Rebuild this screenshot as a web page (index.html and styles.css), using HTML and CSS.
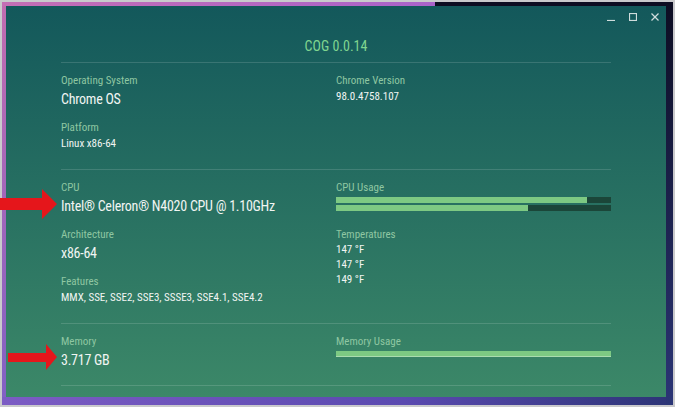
FILE: index.html
```html
<!DOCTYPE html>
<html lang="en">
<head>
    <meta charset="UTF-8">
    <meta name="viewport" content="width=device-width, initial-scale=1.0">
    <title>COG 0.0.14</title>
    <link rel="stylesheet" href="styles.css">
</head>
<body>
    <div class="desktop">
        <div class="window">
            <!-- window controls -->
            <div class="titlebar">
                <svg class="win-btn" viewBox="0 0 8 8"><line x1="0" y1="7.5" x2="8" y2="7.5"/></svg>
                <svg class="win-btn" viewBox="0 0 8 8"><rect x="0.5" y="0.5" width="7" height="7"/></svg>
                <svg class="win-btn" viewBox="0 0 8 8"><line x1="0.5" y1="0.5" x2="7.5" y2="7.5"/><line x1="7.5" y1="0.5" x2="0.5" y2="7.5"/></svg>
            </div>

            <div class="app-title">COG 0.0.14</div>

            <div class="sections">
                <!-- OS -->
                <section class="section">
                    <div class="col">
                        <div class="field">
                            <div class="label">Operating System</div>
                            <div class="value big">Chrome OS</div>
                        </div>
                        <div class="field">
                            <div class="label">Platform</div>
                            <div class="value">Linux x86-64</div>
                        </div>
                    </div>
                    <div class="col">
                        <div class="field">
                            <div class="label">Chrome Version</div>
                            <div class="value">98.0.4758.107</div>
                        </div>
                    </div>
                </section>

                <!-- CPU -->
                <section class="section">
                    <div class="col">
                        <div class="field">
                            <div class="label">CPU</div>
                            <div class="value big">Intel® Celeron® N4020 CPU @ 1.10GHz</div>
                        </div>
                        <div class="field">
                            <div class="label">Architecture</div>
                            <div class="value big">x86-64</div>
                        </div>
                        <div class="field">
                            <div class="label">Features</div>
                            <div class="value">MMX, SSE, SSE2, SSE3, SSSE3, SSE4.1, SSE4.2</div>
                        </div>
                    </div>
                    <div class="col">
                        <div class="field">
                            <div class="label">CPU Usage</div>
                            <div class="bars">
                                <div class="bar"><div class="bar-fill" style="width: 91.3%"></div></div>
                                <div class="bar"><div class="bar-fill" style="width: 69.8%"></div></div>
                            </div>
                        </div>
                        <div class="field">
                            <div class="label">Temperatures</div>
                            <div class="temps">
                                <div>147 °F</div>
                                <div>147 °F</div>
                                <div>149 °F</div>
                            </div>
                        </div>
                    </div>
                </section>

                <!-- Memory -->
                <section class="section last">
                    <div class="col">
                        <div class="field">
                            <div class="label">Memory</div>
                            <div class="value big">3.717 GB</div>
                        </div>
                    </div>
                    <div class="col">
                        <div class="field">
                            <div class="label">Memory Usage</div>
                            <div class="bars">
                                <div class="bar mem"><div class="bar-fill" style="width: 100%"></div></div>
                            </div>
                        </div>
                    </div>
                </section>
            </div>
        </div>
    </div>

    <!-- annotation arrows -->
    <svg class="arrow arrow-cpu" viewBox="0 0 60 32"><polygon points="0,10 42,10 42,1 57,16 42,31 42,22 0,22"/></svg>
    <svg class="arrow arrow-mem" viewBox="0 0 60 28"><polygon points="8,10 46,10 46,1 57,14 46,27 46,19 8,19"/></svg>
</body>
</html>
```

FILE: styles.css
```css
:root {
    --label-color: #8fc7a2;
    --value-color: #f1f5f3;
    --title-color: #80d690;
    --bar-fill: #7dc983;
    --bar-track: #1b4639;
    --line-color: rgba(255, 255, 255, 0.14);
    --arrow-red: #e5161b;
}

* { box-sizing: border-box; margin: 0; padding: 0; }

body {
    position: relative;
    width: 675px;
    height: 407px;
    padding: 2px;
    background: #c9c9cc;
    overflow: hidden;
    font-family: "Roboto Condensed", Roboto, "Liberation Sans", sans-serif;
    font-stretch: 85%;
}

.desktop {
    height: 100%;
    padding: 4px 7px 8px 4px;
    background:
        linear-gradient(#0d0d22, #2b3576) right top / 7px 100% no-repeat,
        linear-gradient(#0d0d22, #0d0d22) right top / 238px 4px no-repeat,
        linear-gradient(to right, #c46eb4, #9c5cd6) left top / 100% 4px no-repeat,
        linear-gradient(to right, #7c5cc4, #5a4ab0 60%, #2c3476) left bottom / 100% 8px no-repeat,
        linear-gradient(#c26cb0, #8060c4);
}

.window {
    width: 660px;
    height: 391px;
    overflow: hidden;
    background: linear-gradient(#13585b, #3c8868);
}

.titlebar {
    height: 32px;
    display: flex;
    justify-content: flex-end;
    align-items: flex-start;
    gap: 14px;
    padding: 7px 7px 0 0;
}

.win-btn {
    width: 8px;
    height: 8px;
    fill: none;
    stroke: #cfdcdc;
    stroke-width: 1.2;
}

.app-title {
    text-align: center;
    color: var(--title-color);
    font-size: 14px;
    line-height: 16px;
    margin-bottom: 8px;
}

.sections { width: 550px; margin: 0 auto; }

.section {
    display: grid;
    grid-template-columns: 1fr 1fr;
    border-top: 1px solid var(--line-color);
    padding: 11px 0 18px;
}
.section.last { border-bottom: 1px solid var(--line-color); padding-bottom: 16px; }

.field + .field { margin-top: 13px; }

.label {
    color: var(--label-color);
    font-size: 11px;
    line-height: 14px;
}

.value {
    color: var(--value-color);
    font-size: 11px;
    line-height: 14px;
    margin-top: 2px;
    white-space: nowrap;
}
.value.big { font-size: 14px; line-height: 18px; letter-spacing: -0.25px; }

.bars {
    display: flex;
    flex-direction: column;
    gap: 2px;
    margin-top: 2px;
    padding-bottom: 4px;
}

.bar { height: 6px; background: var(--bar-track); }
.bar-fill { height: 100%; background: var(--bar-fill); }
.bar.mem .bar-fill { box-shadow: inset 0 -1px rgba(255, 255, 255, 0.35); }

.temps {
    color: var(--value-color);
    font-size: 11px;
    line-height: 15px;
}

.arrow { position: absolute; left: 0; fill: var(--arrow-red); }
.arrow-cpu { top: 188px; width: 60px; height: 32px; }
.arrow-mem { top: 343px; width: 60px; height: 28px; }
```
